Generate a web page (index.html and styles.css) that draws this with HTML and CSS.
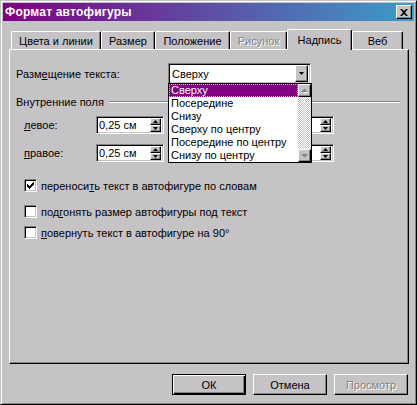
FILE: index.html
```html
<!DOCTYPE html>
<html lang="ru">
<head>
<meta charset="utf-8">
<title>Формат автофигуры</title>
<link rel="stylesheet" href="styles.css">
</head>
<body>
<div class="window">
  <div class="titlebar">
    <span class="title">Формат автофигуры</span>
    <span class="close raised">
      <svg width="8" height="7" viewBox="0 0 8 7"><path d="M0 0h2l2 2 2-2h2L5 3.5 8 7H6L4 5 2 7H0l3-3.5z" fill="#000"/></svg>
    </span>
  </div>
  <div class="body">
    <div class="tabs">
      <div class="tab t1">Цвета и линии</div>
      <div class="tab t2">Размер</div>
      <div class="tab t3">Положение</div>
      <div class="tab t4 dis">Рисунок</div>
      <div class="tab t5 sel">Надпись</div>
      <div class="tab t6">Веб</div>
    </div>
    <div class="panel">
      <div class="place-row">
        <span class="place-lbl">Разм<u>е</u>щение текста:</span>
        <div class="combo sunken">
          <span class="combo-text">Сверху</span>
          <span class="combo-btn raised">
            <svg width="5" height="3" viewBox="0 0 5 3"><path d="M0 0h5L2.5 3z" fill="#000"/></svg>
          </span>
          <div class="dd">
            <div class="dd-items">
              <div class="dd-item sel">Сверху</div>
              <div class="dd-item">Посередине</div>
              <div class="dd-item">Снизу</div>
              <div class="dd-item">Сверху по центру</div>
              <div class="dd-item">Посередине по центру</div>
              <div class="dd-item">Снизу по центру</div>
            </div>
            <div class="dd-scroll">
              <span class="sbtn raised"><svg width="7" height="5" viewBox="0 0 7 5"><path d="M1 4h5L3.5 1.5z" fill="#fff" transform="translate(1 1)"/><path d="M0 4h7L3.5 0.5z" fill="#848284"/></svg></span>
              <span class="track"></span>
              <span class="sbtn raised"><svg width="7" height="5" viewBox="0 0 7 5"><path d="M0 1h7L3.5 4.5z" fill="#848284"/></svg></span>
            </div>
          </div>
        </div>
      </div>
      <div class="group">
        <span>Внутренние поля</span>
        <span class="etch"></span>
      </div>
      <div class="srow">
        <span class="slbl"><u>л</u>евое:</span>
        <div class="spin sunken">
          <span class="spin-text">0,25 см</span>
          <span class="spin-btns">
            <span class="sb raised"><svg width="5" height="3" viewBox="0 0 5 3"><path d="M0 3h5L2.5 0z" fill="#000"/></svg></span>
            <span class="sb raised"><svg width="5" height="3" viewBox="0 0 5 3"><path d="M0 0h5L2.5 3z" fill="#000"/></svg></span>
          </span>
        </div>
        <span class="slbl2"></span>
        <div class="spin sunken">
          <span class="spin-text"></span>
          <span class="spin-btns">
            <span class="sb raised"><svg width="5" height="3" viewBox="0 0 5 3"><path d="M0 3h5L2.5 0z" fill="#000"/></svg></span>
            <span class="sb raised"><svg width="5" height="3" viewBox="0 0 5 3"><path d="M0 0h5L2.5 3z" fill="#000"/></svg></span>
          </span>
        </div>
      </div>
      <div class="srow srow2">
        <span class="slbl"><u>п</u>равое:</span>
        <div class="spin sunken">
          <span class="spin-text">0,25 см</span>
          <span class="spin-btns">
            <span class="sb raised"><svg width="5" height="3" viewBox="0 0 5 3"><path d="M0 3h5L2.5 0z" fill="#000"/></svg></span>
            <span class="sb raised"><svg width="5" height="3" viewBox="0 0 5 3"><path d="M0 0h5L2.5 3z" fill="#000"/></svg></span>
          </span>
        </div>
        <span class="slbl2"></span>
        <div class="spin sunken">
          <span class="spin-text"></span>
          <span class="spin-btns">
            <span class="sb raised"><svg width="5" height="3" viewBox="0 0 5 3"><path d="M0 3h5L2.5 0z" fill="#000"/></svg></span>
            <span class="sb raised"><svg width="5" height="3" viewBox="0 0 5 3"><path d="M0 0h5L2.5 3z" fill="#000"/></svg></span>
          </span>
        </div>
      </div>
      <div class="check c1">
        <span class="cb sunken"><svg width="7" height="7" viewBox="0 0 7 7"><path d="M0 2h1v3H0zM1 3h1v3H1zM2 4h1v3H2zM3 3h1v3H3zM4 2h1v3H4zM5 1h1v3H5zM6 0h1v3H6z" fill="#000"/></svg></span>
        <span>переноси<u>т</u>ь текст в автофигуре по словам</span>
      </div>
      <div class="check c2">
        <span class="cb sunken"></span>
        <span>под<u>г</u>онять размер автофигуры под текст</span>
      </div>
      <div class="check c3">
        <span class="cb sunken"></span>
        <span><u>п</u>овернуть текст в автофигуре на 90°</span>
      </div>
    </div>
    <div class="buttons">
      <span class="btn default">ОК</span>
      <span class="btn raised">Отмена</span>
      <span class="btn raised dis">Просмотр</span>
    </div>
  </div>
</div>
</body>
</html>
```

FILE: styles.css
```css
* { box-sizing: border-box; }

body {
  margin: 0;
  background: #c6c3c6;
  font-family: "Liberation Sans", Arial, sans-serif;
  font-size: 11px;
  color: #000;
}

u { text-decoration: underline; text-underline-offset: 1px; }

.raised {
  background: #c6c3c6;
  border: 1px solid;
  border-color: #fff #000 #000 #fff;
  box-shadow: inset -1px -1px #848284;
}

.sunken {
  background: #fff;
  border: 1px solid;
  border-color: #848284 #fff #fff #848284;
  box-shadow: inset 1px 1px #000, inset -1px -1px #c6c3c6;
}

.window {
  width: 417px;
  height: 405px;
  background: #c6c3c6;
  border: 1px solid;
  border-color: #c6c3c6 #000 #000 #c6c3c6;
  box-shadow: inset 1px 1px #fff, inset -1px -1px #848284;
  padding: 2px;
  display: flex;
  flex-direction: column;
}

.titlebar {
  height: 18px;
  flex: none;
  background: linear-gradient(to right, #800080, #3c9cc8);
  display: flex;
  align-items: center;
  justify-content: space-between;
  padding: 0 2px;
  color: #fff;
}

.title {
  font-weight: bold;
  font-size: 12px;
  letter-spacing: 0.2px;
}

.close {
  width: 16px;
  height: 14px;
  display: flex;
  align-items: center;
  justify-content: center;
}

.body {
  flex: 1;
  display: flex;
  flex-direction: column;
  padding: 0 5px 0 6px;
}

.tabs {
  margin-top: 8px;
  height: 20px;
  display: flex;
  align-items: flex-end;
  padding-left: 2px;
}

.tab {
  height: 18px;
  display: flex;
  align-items: center;
  justify-content: center;
  border: 1px solid;
  border-color: #fff #000 transparent #fff;
  border-bottom: 0;
  border-radius: 2px 2px 0 0;
  box-shadow: inset -1px 0 #848284;
  white-space: nowrap;
}

.t1 { width: 90px; }
.t2 { width: 54px; }
.t3 { width: 75px; }
.t4 { width: 57px; }
.t5 { width: 65px; }
.t6 { width: 51px; }

.tab.sel {
  height: 21px;
  margin-bottom: -1px;
  position: relative;
  z-index: 1;
  background: #c6c3c6;
  padding-bottom: 1px;
}

.tab.dis, .btn.dis {
  color: #848284;
  text-shadow: 1px 1px #fff;
}

.panel {
  height: 315px;
  flex: none;
  border: 1px solid;
  border-color: #fff #000 #000 #fff;
  box-shadow: inset -1px -1px #848284;
  padding: 13px 0 0 6px;
}

.place-row {
  display: flex;
  align-items: center;
  height: 21px;
}

.place-lbl { width: 152px; }

.combo {
  width: 143px;
  height: 21px;
  position: relative;
  display: flex;
  align-items: center;
  padding: 2px;
}

.combo-text { padding-left: 1px; flex: 1; }

.combo-btn {
  width: 13px;
  height: 17px;
  display: flex;
  align-items: center;
  justify-content: center;
}

.dd {
  position: absolute;
  top: 19px;
  left: -1px;
  width: 144px;
  height: 80px;
  border: 1px solid #000;
  background: #fff;
  display: flex;
  z-index: 5;
}

.dd-items { flex: 1; }

.dd-item {
  height: 13px;
  line-height: 13px;
  padding-left: 2px;
  white-space: nowrap;
  overflow: hidden;
}

.dd-item.sel {
  background: #800080;
  color: #fff;
  outline: 1px dotted #80ff80;
  outline-offset: -1px;
}

.dd-scroll {
  width: 13px;
  display: flex;
  flex-direction: column;
}

.sbtn {
  height: 13px;
  display: flex;
  align-items: center;
  justify-content: center;
}

.track {
  flex: 1;
  background: repeating-conic-gradient(#fff 0 25%, #c6c3c6 0 50%) 0 0 / 2px 2px;
}

.group {
  display: flex;
  align-items: center;
  height: 13px;
  margin-top: 11px;
}

.etch {
  flex: 1;
  height: 2px;
  border-top: 1px solid #848284;
  border-bottom: 1px solid #fff;
  margin: 0 8px 0 5px;
}

.srow {
  display: flex;
  align-items: center;
  height: 18px;
  margin-top: 8px;
  padding-left: 8px;
}

.srow2 { margin-top: 10px; }

.slbl { width: 72px; }
.slbl2 { width: 102px; }

.spin {
  width: 68px;
  height: 18px;
  display: flex;
  align-items: center;
  padding: 2px;
}

.spin-text { flex: 1; padding-left: 0; }

.spin-btns {
  width: 11px;
  height: 14px;
  display: flex;
  flex-direction: column;
}

.sb {
  height: 7px;
  display: flex;
  align-items: center;
  justify-content: center;
}

.check {
  display: flex;
  align-items: center;
  height: 13px;
  padding-left: 8px;
}

.c1 { margin-top: 17px; }
.c2 { margin-top: 13px; }
.c3 { margin-top: 8px; }

.cb {
  width: 13px;
  height: 13px;
  margin-right: 4px;
  display: flex;
  align-items: center;
  justify-content: center;
  flex: none;
}

.buttons {
  margin-top: 10px;
  display: flex;
  justify-content: flex-end;
  gap: 7px;
  padding-right: 1px;
}

.btn {
  width: 74px;
  height: 21px;
  display: flex;
  align-items: center;
  justify-content: center;
}

.btn.default {
  background: #c6c3c6;
  border: 1px solid #000;
  box-shadow: inset 1px 1px #fff, inset -1px -1px #000, inset -2px -2px #848284;
}
```
